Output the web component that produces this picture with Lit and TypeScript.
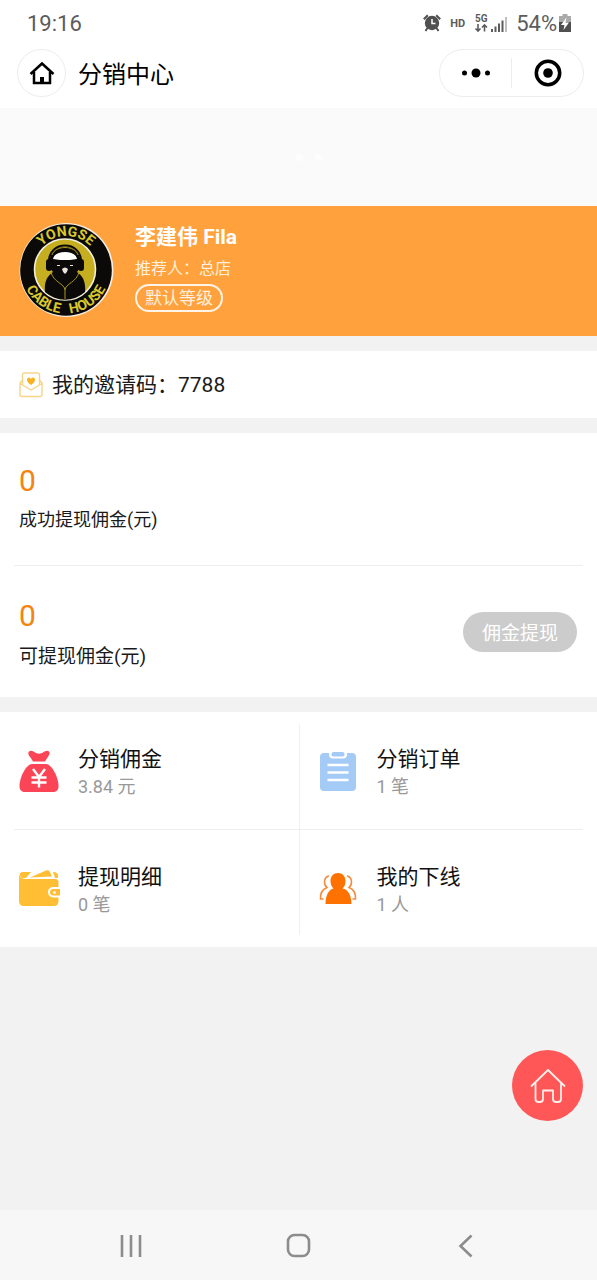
import { LitElement, html, css, svg } from "lit";
import { customElement, property } from "lit/decorators.js";

const bagIcon = svg`
  <path fill="#fb4557" d="M10 1.500C12 0 14 1 16 2.500C18 4 22 4 24 2.500C26 1 28.500 0 30 1.500C31.500 3 30 5.500 28.500 7.500L26 11.500H14L11.500 7.500C9.500 5.500 8.500 3 10 1.500Z"/>
  <path fill="#fb4557" d="M13 14H27C32.500 14 39.500 27 39.500 36C39.500 39.500 38 42 34 42H6C2 42 .500 39.500 .500 36C.500 27 7.500 14 13 14Z"/>
  <path fill="none" stroke="#fff" stroke-width="2.400" d="M14 19L20 27L26 19M20 27V37.500M12.500 27.500H27.500M12.500 32.500H27.500"/>`;

const clipboardIcon = svg`
  <rect x="2" y="3" width="36" height="38" rx="4" fill="#a3cbf5"/>
  <rect x="11" y="0" width="18" height="8.500" rx="4" fill="#fff"/>
  <rect x="13.500" y="2" width="13" height="4.500" rx="2" fill="#a3cbf5"/>
  <path stroke="#fff" stroke-width="2.600" d="M9.500 15H30.500M9.500 22.500H30.500M9.500 30H30.500"/>`;

const walletIcon = svg`
  <path fill="#ffbe33" d="M4 4H12L7 10H3L1 8C0 6 1.500 4 4 4Z"/>
  <path fill="#ffbe33" d="M11 9.500L27 2.500C29 2 30 2.500 31 4L33 8.500Z"/>
  <path fill="#ffbe33" d="M34 4C37 4 39 5 39 8V10H36Z"/>
  <path fill="#ffbe33" d="M0 7C2 10 4 11 7 11H36C38.500 11 39.500 12 39.500 14V19H35C31 19 29 21 29 24C29 27 31 29.500 35 29.500H39.500V33C39.500 36 38 38 35 38H5C2 38 0 36 0 33Z"/>
  <path fill="#ffbe33" fill-rule="evenodd" d="M34 21H41V27.500H34C32 27.500 31 26 31 24.250S32 21 34 21ZM35.500 23.200A1.400 1.400 0 1 0 35.500 26A1.400 1.400 0 1 0 35.500 23.200Z"/>`;

const peopleIcon = svg`
  <path fill="#ff7200" d="M20 5C24.500 5 27.500 8.500 27.500 13C27.500 16 26.500 18.500 24.500 20.500C30 21.500 33.500 27 33.500 36H7.500C7.500 27 11 21.500 15.500 20.500C13.500 18.500 12.500 16 12.500 13C12.500 8.500 15.500 5 20 5Z"/>
  <path fill="none" stroke="#f58a3c" stroke-width="1.500" stroke-linecap="round" d="M10.500 8C6 9.500 5 16 9 19.500C4.500 21.500 2 26 2.500 31H5M29.500 8C34 9.500 35 16 31 19.500C35.500 21.500 38 26 37.500 31H35"/>`;

interface Entry {
  label: string;
  value: string;
  icon: unknown;
}

const entries: Entry[] = [
  { label: "分销佣金", value: "3.84 元", icon: bagIcon },
  { label: "分销订单", value: "1 笔", icon: clipboardIcon },
  { label: "提现明细", value: "0 笔", icon: walletIcon },
  { label: "我的下线", value: "1 人", icon: peopleIcon },
];

@customElement("status-bar")
class StatusBar extends LitElement {
  static styles = css`
    :host {
      display: flex;
      align-items: center;
      justify-content: space-between;
      height: 46px;
      padding: 0 26px 0 27px;
      color: #5c5c5c;
      font-size: 22px;
    }
    .icons {
      display: flex;
      align-items: center;
      gap: 9px;
    }
    .hd {
      font-size: 11px;
      font-weight: 700;
    }
    .network {
      display: flex;
      align-items: flex-end;
      gap: 2px;
    }
    .battery {
      display: flex;
      align-items: center;
      gap: 2px;
    }
    svg {
      display: block;
    }
    .gen {
      font: 700 10px Roboto, sans-serif;
    }
  `;
  render() {
    return html`
      <span>19:16</span>
      <div class="icons">
        <svg width="18" height="18" viewBox="0 0 18 18" fill="none" stroke="#505050">
          <circle cx="9" cy="9" r="7.200" fill="#505050" stroke="none" />
          <path stroke-width="2" d="M.800 5.200L4.800 1.200M13.200 1.200L17.200 5.200M4.500 14L2.500 17M13.500 14L15.500 17" />
          <path stroke="#fff" stroke-width="1.500" d="M9 5V9.500H12.500" />
        </svg>
        <span class="hd">HD</span>
        <span class="network">
          <svg width="15" height="20" viewBox="0 0 15 20">
            <text class="gen" x="1" y="9" fill="#5c5c5c">5G</text>
            <path fill="none" stroke="#5c5c5c" stroke-width="1.600" d="M4 11V18M1.500 15.500L4 18L6.500 15.500M10.500 18.500V12M8 14.500L10.500 12L13 14.500" />
          </svg>
          <svg width="16" height="18" viewBox="0 0 16 18" stroke="#5c5c5c" stroke-width="2">
            <path d="M1 17V14M4.500 17V11.500M8 17V8.500M11.500 17V5.500" />
            <path stroke="#c0c0c0" d="M15 17V2" />
          </svg>
        </span>
        <span class="battery">
          54%
          <svg width="12" height="18" viewBox="0 0 12 18">
            <path fill="#aaa" d="M3.500 0H8.500V2H12V10H0V2H3.500Z" />
            <path fill="#505050" d="M0 8H12V18H0Z" />
            <path fill="#fff" d="M7.500 3.500L2 11H5.500L4.500 16L10 8.500H6.500Z" />
          </svg>
        </span>
      </div>
    `;
  }
}

@customElement("title-bar")
class TitleBar extends LitElement {
  static styles = css`
    :host {
      display: flex;
      align-items: center;
      gap: 12px;
      height: 62px;
      padding: 0 13px 8px 17px;
      box-sizing: border-box;
    }
    button {
      padding: 0;
      border: 0;
      background: none;
      display: grid;
      place-items: center;
    }
    .home {
      width: 49px;
      height: 48px;
      border: 1px solid #ededed;
      border-radius: 24px;
    }
    h1 {
      flex: 1;
      margin: 0;
      padding-top: 4px;
      font-size: 24px;
      line-height: 32px;
      font-weight: 400;
      color: #000;
    }
    .capsule {
      display: flex;
      align-items: center;
      width: 145px;
      height: 48px;
      box-sizing: border-box;
      border: 1px solid #ededed;
      border-radius: 24px;
    }
    .capsule button {
      flex: 1;
      height: 30px;
    }
    .capsule button + button {
      border-left: 1px solid #ededed;
    }
  `;
  render() {
    return html`
      <button class="home" aria-label="首页">
        <svg width="26" height="24" viewBox="0 0 26 24" fill="none" stroke="#000" stroke-width="2.500">
          <path d="M1.500 13L13 2.500L24.500 13M5 11V22H21V11" />
          <path stroke-width="4" d="M13 22V16" />
        </svg>
      </button>
      <h1>分销中心</h1>
      <div class="capsule">
        <button aria-label="更多">
          <svg width="30" height="12" viewBox="0 0 30 12">
            <circle cx="3.500" cy="6" r="2.500" />
            <circle cx="15" cy="6" r="4.500" />
            <circle cx="26.500" cy="6" r="2.500" />
          </svg>
        </button>
        <button aria-label="关闭">
          <svg width="28" height="28" viewBox="0 0 28 28">
            <circle cx="14" cy="14" r="11.700" fill="none" stroke="#000" stroke-width="3.500" />
            <circle cx="14" cy="14" r="4.800" />
          </svg>
        </button>
      </div>
    `;
  }
}

@customElement("profile-card")
class ProfileCard extends LitElement {
  static styles = css`
    :host {
      display: flex;
      align-items: flex-start;
      gap: 21px;
      padding: 16px 19px 17px;
      background: #ffa23d;
      color: #fff;
    }
    .avatar {
      display: block;
      flex: none;
      overflow: visible;
    }
    .ring {
      font: 700 14px Roboto, sans-serif;
      fill: #d9c92c;
    }
    .info {
      display: flex;
      flex-direction: column;
      align-items: flex-start;
    }
    h2 {
      margin: 0;
      font-size: 21px;
      line-height: 31px;
      font-weight: 700;
    }
    .referrer {
      font-size: 16px;
      line-height: 31px;
      color: #ffefdc;
    }
    .level {
      padding: 0 8px;
      border: 2px solid #fff4e8;
      border-radius: 14px;
      font-size: 17px;
      line-height: 24px;
      color: #ffefdc;
    }
  `;
  render() {
    return html`
      <svg class="avatar" width="95" height="97" viewBox="0 0 95 97" role="img" aria-label="Yongse Cable House">
        <defs>
          <path id="upper" d="M13 48A34 34 0 0 1 81 48" />
          <path id="lower" d="M3 47.500A44 44 0 0 0 91 47.500" />
        </defs>
        <circle cx="47.500" cy="48" r="47" fill="#f5ecdd" />
        <circle cx="47" cy="48" r="45.800" fill="#0b0a08" />
        <circle cx="46" cy="47.500" r="30.500" fill="#c5ae1f" stroke="#f3efd8" stroke-width="1.600" />
        <path fill="#0b0a08" d="M26 70C25 60 28 54 34 50C30 46 29 40 31 36C33 28 39 25 46 25S59 28 61 36C63 40 62 46 58 50C64 54 67 60 66 70A30 30 0 0 1 26 70Z" />
        <path fill="none" stroke="#0b0a08" stroke-width="2" d="M30 40C29 18 63 18 62 40" />
        <rect x="27" y="37" width="6" height="12" rx="3" fill="#0b0a08" />
        <rect x="59" y="37" width="6" height="12" rx="3" fill="#0b0a08" />
        <path fill="none" stroke="#a9951d" d="M33 33C36 23 56 23 59 33" />
        <path fill="#fff" d="M34 37C35 32 40 30 46 30S57 32 58 37L51 38H41Z" />
        <path stroke="#e8dfcf" stroke-width="1.200" d="M38 43.500H41M51 43.500H54" />
        <path fill="#e9e4dd" d="M43 47Q46 44 49 47Q48 51 46 52Q44 51 43 47Z" />
        <path fill="none" stroke="#a9951d" d="M32 50C34 60 46 62 46 68V77M60 50C58 60 46 62 46 68" />
        <text class="ring"><textPath href="#upper" startOffset="50%" text-anchor="middle">YONGSE</textPath></text>
        <text class="ring"><textPath href="#lower" startOffset="50%" text-anchor="middle">CABLE&#160;&#160; HOUSE</textPath></text>
      </svg>
      <div class="info">
        <h2>李建伟 Fila</h2>
        <span class="referrer">推荐人：总店</span>
        <span class="level">默认等级</span>
      </div>
    `;
  }
}

@customElement("menu-entry")
class MenuEntry extends LitElement {
  @property({ attribute: false }) entry!: Entry;
  static styles = css`
    a {
      display: flex;
      align-items: center;
      gap: 18px;
      height: 117px;
      color: #111;
      text-decoration: none;
    }
    .text {
      display: flex;
      flex-direction: column;
      padding-top: 3px;
    }
    .label {
      font-size: 21px;
      line-height: 28px;
    }
    .value {
      font-size: 18px;
      line-height: 27px;
      color: #999;
    }
  `;
  render() {
    const { icon, label, value } = this.entry;
    return html`
      <a href="#">
        <svg width="41" height="42" viewBox="0 0 41 42" aria-hidden="true">${icon}</svg>
        <span class="text">
          <span class="label">${label}</span>
          <span class="value">${value}</span>
        </span>
      </a>
    `;
  }
}

@customElement("system-nav")
class SystemNav extends LitElement {
  static styles = css`
    :host {
      display: flex;
      justify-content: center;
      height: 70px;
      background: #f7f7f7;
    }
    button {
      width: 28%;
      padding: 0;
      border: 0;
      background: none;
      display: grid;
      place-items: center;
    }
    svg {
      fill: none;
      stroke: #8c8c8c;
      stroke-width: 2.6;
    }
  `;
  render() {
    return html`
      <button aria-label="最近任务">
        <svg width="26" height="26" viewBox="0 0 26 26"><path d="M4 3V25M13 3V25M22 3V25" /></svg>
      </button>
      <button aria-label="主屏幕">
        <svg width="26" height="26" viewBox="0 0 26 26"><rect x="2" y="3" width="21" height="21" rx="6.500" /></svg>
      </button>
      <button aria-label="返回">
        <svg width="26" height="26" viewBox="0 0 26 26"><path d="M18.500 3.500L7.500 14L18.500 24.500" /></svg>
      </button>
    `;
  }
}

@customElement("app-root")
class AppRoot extends LitElement {
  static styles = css`
    :host {
      display: flex;
      flex-direction: column;
      min-height: 100vh;
      background: #f2f2f2;
      color: #1a1a1a;
      font-family: Roboto, "Noto Sans CJK SC", sans-serif;
    }
    header {
      background: #fff;
    }
    .refresh {
      display: flex;
      align-items: center;
      justify-content: center;
      gap: 12px;
      height: 98px;
      padding-left: 20px;
      background: #fafafa;
    }
    .refresh i {
      width: 7px;
      height: 7px;
      border-radius: 4px;
      background: #fdfdfd;
    }
    main {
      flex: 1;
      display: flex;
      flex-direction: column;
      gap: 15px;
    }
    section {
      background: #fff;
    }
    .invite {
      display: flex;
      align-items: center;
      gap: 9px;
      height: 67px;
      padding: 0 19px;
      font-size: 21px;
      line-height: 24px;
    }
    .balances {
      padding: 0 14px;
    }
    .balance {
      display: flex;
      align-items: center;
      justify-content: space-between;
      height: 132px;
      padding: 0 6px 0 5px;
      box-sizing: border-box;
    }
    .balance + .balance {
      border-top: 1px solid #eee;
    }
    .sum {
      padding-top: 2px;
    }
    .sum.available {
      padding-top: 10px;
    }
    .amount {
      font-size: 30px;
      line-height: 40px;
      color: #f58312;
    }
    .caption {
      font-size: 18px;
      line-height: 38px;
    }
    .available .caption {
      font-size: 19px;
      line-height: 42px;
    }
    .withdraw {
      height: 40px;
      padding: 0 19px;
      border: 0;
      border-radius: 20px;
      background: #ccc;
      color: #fff;
      font: inherit;
      font-size: 19px;
    }
    .menu {
      display: grid;
      grid-template-columns: 1fr 1fr;
      padding: 0 14px;
    }
    .cell {
      padding-left: 5px;
    }
    .cell:nth-child(even) {
      padding-left: 19px;
      background: linear-gradient(#f0f0f0, #f0f0f0) left top / 1px 105px no-repeat;
    }
    .cell:nth-child(2) {
      background-position: left bottom;
    }
    .cell:nth-child(-n + 2) {
      border-bottom: 1px solid #eee;
    }
    .fab {
      position: fixed;
      right: 14px;
      bottom: 159px;
      display: grid;
      place-items: center;
      width: 71px;
      height: 71px;
      border-radius: 50%;
      background: #ff5757;
    }
  `;
  render() {
    return html`
      <header>
        <status-bar></status-bar>
        <title-bar></title-bar>
      </header>
      <div class="refresh"><i></i><i></i></div>
      <main>
        <profile-card></profile-card>
        <section class="invite">
          <svg width="24" height="26" viewBox="0 0 24 26" fill="none" stroke="#f8d488" stroke-width="1.400">
            <path d="M3.500 13V3Q3.500 1 5.500 1H18.500Q20.500 1 20.500 3V13M3.500 8L1 11V22.500Q1 24.500 3 24.500H21Q23 24.500 23 22.500V11L20.500 8M1 11.500L12 18L23 11.500" />
            <path fill="#fbb021" stroke="none" d="M12 13C6 9 8 5.500 10 5.500Q11.500 5.500 12 7Q12.500 5.500 14 5.500C16 5.500 18 9 12 13Z" />
          </svg>
          <span>我的邀请码：7788</span>
        </section>
        <section class="balances">
          <div class="balance">
            <div class="sum">
              <div class="amount">0</div>
              <div class="caption">成功提现佣金(元)</div>
            </div>
          </div>
          <div class="balance">
            <div class="sum available">
              <div class="amount">0</div>
              <div class="caption">可提现佣金(元)</div>
            </div>
            <button class="withdraw">佣金提现</button>
          </div>
        </section>
        <section class="menu">
          ${entries.map((entry) => html`<div class="cell"><menu-entry .entry=${entry}></menu-entry></div>`)}
        </section>
      </main>
      <a class="fab" href="#" aria-label="首页">
        <svg width="36" height="36" viewBox="0 0 36 36" fill="none" stroke="#fff0ea" stroke-width="1.800" stroke-linejoin="round">
          <path d="M1 18.500L18 2L35 18.500M5.500 15V31Q5.500 34 8.500 34H10Q13 34 13 31V22.500H23V31Q23 34 26 34H28Q31 34 31 31V15" />
        </svg>
      </a>
      <system-nav></system-nav>
    `;
  }
}
